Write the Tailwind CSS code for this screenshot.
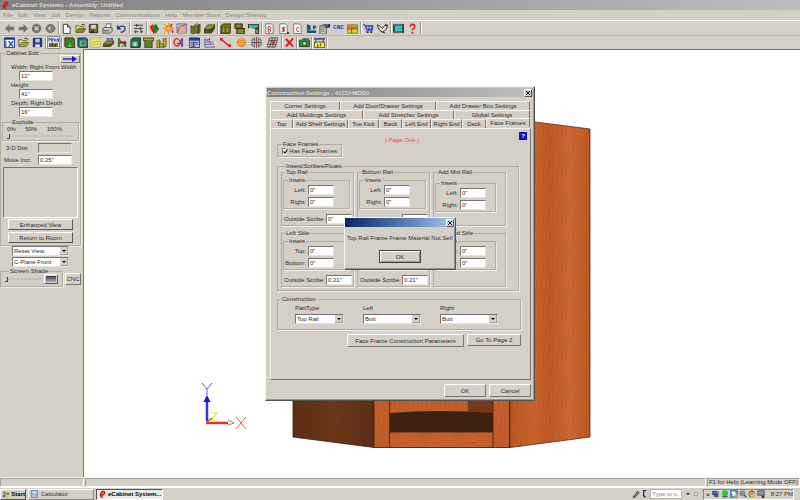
<!DOCTYPE html>
<html lang="en">

<head>
    <meta charset="UTF-8">
    <meta name="viewport" content="width=device-width, initial-scale=1.0">
    <title>eCabinet Systems - Assembly: Untitled</title>
    <script src="https://cdn.jsdelivr.net/npm/@tailwindcss/browser@4"></script>
</head>

<body class="relative flex h-screen flex-col overflow-hidden bg-[#d4d0c8] font-['Liberation_Sans',Arial,sans-serif] text-[6px] leading-[8px] text-[#2c2a28]
    [&_fieldset]:min-w-0 [&_fieldset]:border [&_fieldset]:border-[#b0aca4] [&_fieldset]:shadow-[1px_1px_0_#f0eee8]
    [&_legend]:ml-1 [&_legend]:px-px [&_legend]:leading-[6px] [&_legend]:whitespace-nowrap
    [&_input[type=text]]:h-[10px] [&_input[type=text]]:min-w-0 [&_input[type=text]]:border [&_input[type=text]]:border-t-[#77736c] [&_input[type=text]]:border-l-[#77736c] [&_input[type=text]]:border-r-[#e8e5de] [&_input[type=text]]:border-b-[#e8e5de] [&_input[type=text]]:bg-white [&_input[type=text]]:px-px
    [&_select]:h-[10px] [&_select]:w-full [&_select]:appearance-none [&_select]:border [&_select]:border-t-[#77736c] [&_select]:border-l-[#77736c] [&_select]:border-r-[#e8e5de] [&_select]:border-b-[#e8e5de] [&_select]:bg-white [&_select]:px-px [&_select]:leading-[8px]
    [&_label]:whitespace-nowrap [&_button]:whitespace-nowrap">

    <!-- title bar -->
    <header class="flex h-[10px] shrink-0 items-center gap-[3px] bg-linear-to-r from-[#808080] to-[#bcbcbc] pl-0.5">
        <svg class="h-2 w-[7px]" viewBox="0 0 14 16"><path d="M3 11c6-1 9-4 8-7-1-2-5-1-7 3-2 5 0 8 4 7" fill="none" stroke="#d81414" stroke-width="3.2"/></svg>
        <h1 class="font-bold text-[#dedbd5]">eCabinet Systems - Assembly: Untitled</h1>
    </header>

    <nav class="flex h-[10px] shrink-0 items-center gap-[5px] pl-[3px] text-[#8b8881]">
        <a href="#">File</a>
        <a href="#">Edit</a>
        <a href="#">View</a>
        <a href="#">Job</a>
        <a href="#">Design</a>
        <a href="#">Reports</a>
        <a href="#">Communications</a>
        <a href="#">Help</a>
        <a href="#">Member Store</a>
        <a href="#">Design Sharing</a>
    </nav>

    <!-- toolbars -->
    <div class="flex h-[15px] shrink-0 items-center border-t border-[#f4f2ee] pl-[3px] [&_button]:flex [&_button]:flex-1 [&_button]:justify-center [&_svg]:size-[11px] [&>i]:mx-px [&>i]:h-3 [&>i]:w-px [&>i]:bg-[#99958d] [&>i]:shadow-[1px_0_0_#fff]">
        <div class="flex w-[54px]">
            <button aria-label="Back"><svg viewBox="0 0 12 12"><path d="M1 6l5-5v3h5v4H6v3z" fill="#77746e"/></svg></button>
            <button aria-label="Forward"><svg viewBox="0 0 12 12"><path d="M11 6L6 1v3H1v4h5v3z" fill="#77746e"/></svg></button>
            <button aria-label="Stop"><svg viewBox="0 0 12 12"><circle cx="6" cy="6" r="5.2" fill="#77746e"/><path d="M4 4l4 4M8 4l-4 4" stroke="#d4d0c8" stroke-width="1.5"/></svg></button>
            <button aria-label="Refresh"><svg viewBox="0 0 12 12"><circle cx="6" cy="6" r="3.7" fill="none" stroke="#77746e" stroke-width="2.6"/><path d="M6 3v6l3-3z" fill="#77746e"/><path d="M0 6h3M9 6h3" stroke="#77746e"/></svg></button>
        </div>
        <i></i>
        <div class="flex w-[68px]">
            <button aria-label="New"><svg viewBox="0 0 12 12"><path d="M2.500 1.500h4.500l3 3v7h-7.500z" fill="#fff" stroke="#333"/><path d="M7 1.500v3h3" fill="none" stroke="#333"/></svg></button>
            <button aria-label="Open"><svg viewBox="0 0 12 12"><path d="M1 10V3h3l1 1h4v2" fill="#ece88c" stroke="#55531a"/><path d="M1 10.500l2.500-4.500H12l-3 4.500z" fill="#85822b" stroke="#55531a" stroke-width=".7"/><path d="M7 2q2-2 4 1" fill="none" stroke="#222"/></svg></button>
            <button aria-label="Save"><svg viewBox="0 0 12 12"><path d="M1.500 1.500h9v9h-9z" fill="#76742a" stroke="#222"/><path d="M3.500 2h5v4h-5z" fill="#d9d6ce"/><path d="M3.500 8h5v3h-5z" fill="#222"/><path d="M7 8.500h1V10H7z" fill="#fff"/></svg></button>
            <button aria-label="Print"><svg viewBox="0 0 12 12"><path d="M4 5l1-4h5L9 5" fill="#fff" stroke="#444" stroke-width=".8"/><path d="M1 6l2-1h8v4l-2 2H1z" fill="#d8d5cc" stroke="#444"/><path d="M2 8.500h6" stroke="#333"/><path d="M7 9.300h2" stroke="#c9bf33"/></svg></button>
            <button aria-label="Undo"><svg viewBox="0 0 12 12"><path d="M2 6c2-4 8-3 8 0 0 2-1 3-3 4H5" fill="none" stroke="#20307e" stroke-width="1.3"/><path d="M1 2v5h5z" fill="#20307e"/></svg></button>
        </div>
        <i></i>
        <div class="flex w-[14px]">
            <button aria-label="Settings"><svg viewBox="0 0 12 12"><path d="M1 2.500h10M1 6h10M1 9.500h5M8 9.500h3" stroke="#444"/><path d="M4 1v3M8 4.500v3M3 8v3M9 8v3" stroke="#444" stroke-width="1.400"/></svg></button>
        </div>
        <i></i>
        <div class="flex w-[68px]">
            <button aria-label="Materials"><svg viewBox="0 0 12 12"><path d="M1 4l3-3 3 9-2 2z" fill="#e22216"/><path d="M4 3l4-2 3 6-4 5z" fill="#16921c"/><path d="M1 4l2 5 4 2-3-7z" fill="#d2231a"/><path d="M7 2l3 5" stroke="#4a3814"/></svg></button>
            <button aria-label="Lighting"><svg viewBox="0 0 12 12"><circle cx="6" cy="6" r="3" fill="#f6c32a" stroke="#e45718"/><path d="M1 1l2 2M11 1L9 3M1 11l2-2M11 11L9 9M0 6h2M10 6h2M6 0v2M6 10v2" stroke="#cf8d1b"/><path d="M9 1v3M10.500 8v3" stroke="#b71616" stroke-width="1.400"/></svg></button>
            <button aria-label="Arc"><svg viewBox="0 0 12 12"><path d="M1 1h10.500v10H1z" fill="#b9b8db" stroke="#7474a9"/><path d="M2 10.500C2 5 6 2 11 2v8.500z" fill="#dda996"/><path d="M2 10.500C2 5 6 2 11 2" fill="none" stroke="#b93c2c"/></svg></button>
            <button aria-label="Cabinet doors"><svg viewBox="0 0 12 12"><path d="M1 3l3 1v8l-3-1zM5 3h4v8H5zM9 3l2-2v9l-2 2z" fill="#7c7a20" stroke="#302f0c" stroke-width=".7"/><path d="M4 3l3-2 4 1" fill="none" stroke="#5b5918"/></svg></button>
            <button aria-label="Board"><svg viewBox="0 0 12 12"><path d="M0 7l4-5h8L8 7z" fill="#96933b" stroke="#302f0c" stroke-width=".7"/><path d="M0 7h8v4H0zM8 7l4-5v4l-4 5z" fill="#56541a" stroke="#302f0c" stroke-width=".7"/></svg></button>
        </div>
        <i></i>
        <div class="flex w-[41px]">
            <button aria-label="Cabinet"><svg viewBox="0 0 12 12"><path d="M1 3l3-2h8v9l-2 2H1z" fill="#7c7a20" stroke="#302f0c"/><path d="M2.500 4.500h3v6h-3zM6.500 4.500h3v6h-3z" fill="#a29f47" stroke="#302f0c" stroke-width=".6"/></svg></button>
            <button aria-label="Cabinet group"><svg viewBox="0 0 12 12"><path d="M1 1h8v5H1zM3 6h9v6H3z" fill="#6f6d1d" stroke="#302f0c"/><path d="M3 3h4M5 8h5M5 10h5" stroke="#b4b04c"/></svg></button>
            <button aria-label="Counter top"><svg viewBox="0 0 12 12"><path d="M0 1h12v11H8V6H0z" fill="#2b2f24"/><path d="M1 2h10v3H9L7 7 5 5H1z" fill="#36b4b2"/><path d="M1 5h3l2 3v3H1z" fill="#dcdbc0"/><path d="M9 7h2v4H9z" fill="#a9a75a"/></svg></button>
        </div>
        <i></i>
        <div class="flex w-[96px]">
            <button aria-label="Bill report"><svg viewBox="0 0 12 12"><path d="M2 1h6l2 2v8.500H2z" fill="#fff" stroke="#555" stroke-width=".8"/><path d="M4.500 4v6h2q1.500-1.500 0-3 1.500-1.500 0-3zM4.500 7h2" fill="none" stroke="#c52424"/></svg></button>
            <button aria-label="Cost report"><svg viewBox="0 0 12 12"><path d="M2 1h6l2 2v8.500H2z" fill="#fff" stroke="#555" stroke-width=".8"/><path d="M8 5H5v2h2v2H4M6 4v6" fill="none" stroke="#c52424"/><path d="M10 10h2v2h-2z" fill="#222"/></svg></button>
            <button aria-label="Cut report"><svg viewBox="0 0 12 12"><path d="M2 1h6l2 2v8.500H2z" fill="#fff" stroke="#555" stroke-width=".8"/><path d="M8 5.500q-3-2-3 1.500t3 2" fill="none" stroke="#c52424"/></svg></button>
            <button aria-label="Machine"><svg viewBox="0 0 12 12"><path d="M1 1v10h10V8H5V3z" fill="#28507c"/><path d="M6 3h5v2L8 8V4z" fill="#37465a"/><path d="M2 8h9" stroke="#62a3b4"/></svg></button>
            <button aria-label="Properties"><svg viewBox="0 0 12 12"><path d="M1 3h7v9H1z" fill="#c9c6be" stroke="#555"/><path d="M2 5h5M2 7h4M2 9h4" stroke="#777"/><path d="M3 2l4-1 4 1v3L8 6 6 3z" fill="#4e5056"/><path d="M10 1h2v4h-2z" fill="#1c20b0"/></svg></button>
            <button class="items-center font-['Liberation_Mono',monospace] text-[6px] font-bold text-[#2d36c6]">CNC</button>
            <button aria-label="Nesting"><svg viewBox="0 0 12 12"><path d="M.5 2h11v9H.5z" fill="#ded22c" stroke="#8d7b19"/><path d="M1 2.500h6v4H1z" fill="#e97b23"/><path d="M7 3h4v3H7z" fill="#50b93a"/><path d="M1 6.500h10M5 6.500V11" stroke="#b32c16"/></svg></button>
        </div>
        <i></i>
        <div class="flex w-[27px]">
            <button aria-label="Cart"><svg viewBox="0 0 12 12"><path d="M0 2h2l2 6h6l1-5H3" fill="#4750d3" stroke="#2028a6"/><path d="M3 5h8M5 3v5M8 3v5" stroke="#c8cbef" stroke-width=".6"/><path d="M4 10h2M8 10h2" stroke="#222" stroke-width="2"/></svg></button>
            <button aria-label="Handshake"><svg viewBox="0 0 12 12"><path d="M0 2l3 1 3 3 2-3 4-1-2 5-4 3-4-3z" fill="#d5e3d2" stroke="#333"/><path d="M4 9l5 2M9 1l2 3" stroke="#222"/><path d="M1 4l2 2" stroke="#32843a"/></svg></button>
        </div>
        <i></i>
        <div class="flex w-[27px]">
            <button aria-label="Video"><svg viewBox="0 0 12 12"><path d="M0 1h12v10H0z" fill="#2b4545"/><path d="M2 3h8v6H2z" fill="#39c3c0"/><path d="M1 2h10M1 10h10" stroke="#b9cfcd" stroke-dasharray="1 1"/></svg></button>
            <button aria-label="Help"><svg viewBox="0 0 12 12"><path d="M3.500 4q0-2.500 2.500-2.500T8.500 4q0 1.500-2.500 3v1" fill="none" stroke="#dc1f1f" stroke-width="1.700"/><path d="M5 9.500h2v2H5z" fill="#dc1f1f"/></svg></button>
        </div>
        <i></i>
    </div>

    <div class="flex h-[14px] shrink-0 items-center border-t border-[#b7b3ab] pl-[3px] [&_button]:flex [&_button]:flex-1 [&_button]:justify-center [&_svg]:size-[11px] [&>i]:mx-px [&>i]:h-3 [&>i]:w-px [&>i]:bg-[#99958d] [&>i]:shadow-[1px_0_0_#fff]">
        <div class="flex w-[41px]">
            <button aria-label="Exit view"><svg viewBox="0 0 12 12"><path d="M.5 1h11v10.500H.5z" fill="#fff" stroke="#1c2fa6"/><path d="M0 1h12v2H0z" fill="#1c2fa6"/><path d="M5 4.500l5 6M10 4.500l-5 6" stroke="#2238d0" stroke-width="1.500"/><path d="M2 4v7" stroke="#222"/></svg></button>
            <button aria-label="Open assembly"><svg viewBox="0 0 12 12"><path d="M1 10V3h3l1 1h4v2" fill="#ece88c" stroke="#55531a"/><path d="M1 10.500l2.500-4.500H12l-3 4.500z" fill="#aaa63f" stroke="#55531a" stroke-width=".7"/><path d="M7 2q2-2 4 1" fill="none" stroke="#222"/></svg></button>
            <button aria-label="Save assembly"><svg viewBox="0 0 12 12"><path d="M1.500 1.500h9v9h-9z" fill="#2632a6" stroke="#141c5c"/><path d="M3.500 2h5v4h-5z" fill="#a3d8a6"/><path d="M3.500 8h5v3h-5z" fill="#dbe7ff"/></svg></button>
        </div>
        <i></i>
        <div class="flex w-[13px] border border-[#8b8780] bg-[#efede8]">
            <button aria-label="Main"><svg viewBox="0 0 12 12"><path d="M1 5V1l1.500 2L4 1v4M5 5V2h2v3M8.500 2v3M10 5V2h1.500v3" fill="none" stroke="#2632b6" stroke-width=".9"/><path d="M1 7l3-1 3 1 4-1v5H1z" fill="#7c7a30"/><path d="M2 7v4M5 7v4M8 7v4" stroke="#333217"/></svg></button>
        </div>
        <i></i>
        <div class="flex w-[105px]">
            <button aria-label="Base cabinet"><svg viewBox="0 0 12 12"><path d="M1 1h9l2 2v9H3l-2-2z" fill="#6c6a20" stroke="#2c2b0c"/><path d="M3 4h7v5H3z" fill="#1f8d2e"/><path d="M5 9l1.500-3L8 9v2H5z" fill="#3dd052"/></svg></button>
            <button aria-label="Wall cabinet"><svg viewBox="0 0 12 12"><path d="M1 1h9l2 2v9H3l-2-2z" fill="#25706d" stroke="#143634"/><path d="M3 4h7v6H3z" fill="#48c1bc"/><path d="M5 5h4v4H5z" fill="#7a7428"/></svg></button>
            <button aria-label="Panel"><svg viewBox="0 0 12 12"><path d="M.5 2l1.500-1h9.500v10H.5z" fill="#e5df7c" stroke="#b0a846" stroke-dasharray="2 1"/><path d="M2 5h8M2 8h8" stroke="#c6be58"/></svg></button>
            <button aria-label="Shelf"><svg viewBox="0 0 12 12"><path d="M0 8l4-4h8l-4 4z" fill="#8b8834" stroke="#302f0c" stroke-width=".7"/><path d="M0 8h8v3H0zM8 8l4-4v3l-4 4z" fill="#4d4b18"/><path d="M4 1h3v2H4zM8 1h3v2H8z" fill="#4148ab"/></svg></button>
            <button aria-label="Chair"><svg viewBox="0 0 12 12"><path d="M2 1v10M2 6h7v5" fill="none" stroke="#167c2b" stroke-width="2"/><path d="M3 2l2 3h5v2H4z" fill="#b31f1f"/><path d="M5 11l4-4" stroke="#431"/></svg></button>
            <button aria-label="Appliance"><svg viewBox="0 0 12 12"><path d="M1 3l2-2h9v9l-2 2H1z" fill="#246a32" stroke="#14381a"/><path d="M2 5h7v5H2z" fill="#39a8cf"/><path d="M4 6h3v4H4z" fill="#e7e94f"/><path d="M9 5h2v5H9z" fill="#2538ad"/></svg></button>
            <button aria-label="Hood"><svg viewBox="0 0 12 12"><path d="M0 1h12v3h-2v8H2V4H0z" fill="#77751f" stroke="#34330e" stroke-width=".8"/><path d="M4 6h4v5H4z" fill="#2d8f39"/><path d="M1 2.500h10" stroke="#bcb94e"/></svg></button>
            <button aria-label="Trim"><svg viewBox="0 0 12 12"><path d="M1 4h3v8H1zM8 3l3-2v9l-3 2zM4 6l4 2v3H4z" fill="#bcb738" stroke="#4a4814" stroke-width=".8"/><path d="M3 2l2 3M8 1v3" stroke="#77751f"/></svg></button>
        </div>
        <i></i>
        <div class="flex w-[109px]">
            <button aria-label="Origin"><svg viewBox="0 0 12 12"><path d="M6 3Q3 0 1.500 4T4 10q3 0 3-3H4M7 3l3 7M10 2L7 8" fill="none" stroke="#cf2525" stroke-width="1.400"/><path d="M9 1h2v10H9z" fill="#3039b0" fill-opacity=".7"/></svg></button>
            <button aria-label="Sheet"><svg viewBox="0 0 12 12"><path d="M.5 1h11v10.500H.5z" fill="#bcc3d9" stroke="#323c6d"/><path d="M0 1h12v3H0z" fill="#2838a2"/><path d="M2 6h8M2 8h8M2 10h5M5 5v6" stroke="#434e7b"/></svg></button>
            <button aria-label="Dimensions"><svg viewBox="0 0 12 12"><path d="M1 1v10h11M1 3h5M2 5.500h8M1 8h10" fill="none" stroke="#5656a9"/><path d="M3 3l5 5" stroke="#b25a79"/><path d="M6 1v3" stroke="#333"/></svg></button>
            <button aria-label="Line"><svg viewBox="0 0 12 12"><path d="M2 3l8 7" stroke="#d22626" stroke-width="1.600"/><path d="M0 1h3v3H0zM9 8h3v3H9z" fill="#d22626"/><path d="M1 1h1v1H1z" fill="#2733b5"/></svg></button>
            <button aria-label="Ball"><svg viewBox="0 0 12 12"><circle cx="6" cy="6" r="4.300" fill="#f5cb3a" stroke="#e0831f" stroke-width="1.200"/><path d="M1 6h10M3 8.500h7M3 4h6" stroke="#e0651f" stroke-width=".8"/></svg></button>
            <button aria-label="Mirror"><svg viewBox="0 0 12 12"><path d="M4 1L1 3v6l3 2zM8 1l3 2v6l-3 2z" fill="#c7bdc0" stroke="#555"/><path d="M6 0v12" stroke="#a32c41"/><path d="M1 6h10" stroke="#555"/></svg></button>
            <button aria-label="Grid"><svg viewBox="0 0 12 12"><path d="M3 1h9l-3 10H0zM2 4h9M1 8h9M6 1L3 11M9 1L6 11" fill="none" stroke="#4a4545"/><path d="M6 4h3L8 8H5z" fill="#c03b4a"/></svg></button>
        </div>
        <i></i>
        <div class="flex w-[12px]">
            <button aria-label="Delete"><svg viewBox="0 0 12 12"><path d="M2 2l8 8.500M10 1.500L2 10.500" stroke="#d91f1f" stroke-width="2.200"/></svg></button>
        </div>
        <i></i>
        <div class="flex w-[12px]">
            <button aria-label="Camera"><svg viewBox="0 0 12 12"><path d="M.5 3.500H3L4.500 2h4L10 3.500h1.500v7H.5z" fill="#37873a" stroke="#1d4d20"/><circle cx="6" cy="7" r="2.300" fill="#b8dcb6" stroke="#173d1a"/><path d="M9 1h2v2H9z" fill="#c4433b"/></svg></button>
        </div>
        <i></i>
        <div class="flex w-[12px]">
            <button aria-label="Ruler"><svg viewBox="0 0 12 12"><path d="M.5 5.500h11v6H.5z" fill="#efe545" stroke="#68631b"/><path d="M0 1h12v2H0z" fill="#4650a0"/><path d="M2 3v3M10 3v3M4 8v3M7 7v3" stroke="#333"/></svg></button>
        </div>
        <i></i>
    </div>

    <main class="flex min-h-0 flex-1">
        <!-- left panel -->
        <aside class="w-[84px] shrink-0 border-r border-[#77736c] pt-px pr-0.5">
            <fieldset class="pb-0.5">
                <legend>Cabinet Edit</legend>
                <div class="flex h-[7px] justify-end">
                    <button aria-label="Next" class="-mt-px flex h-2 w-5 items-center justify-center border border-t-white border-l-white border-r-[#77736c] border-b-[#77736c]"><svg class="h-1.5 w-4" viewBox="0 0 16 6"><path d="M1 3h10" stroke="#1414d8" stroke-width="1.300"/><path d="M10 0l5 3-5 3z" fill="#1414d8"/></svg></button>
                </div>
                <div class="flex flex-col items-start pl-[10px] [&_input]:ml-2 [&_input]:w-[34px]">
                    <label for="width">Width: Right Front Width</label>
                    <input type="text" id="width" value='12"'>
                    <label for="height">Height</label>
                    <input type="text" id="height" value='41"'>
                    <label for="depth">Depth: Right Depth</label>
                    <input type="text" id="depth" value='16"'>
                </div>
                <fieldset class="mx-px mt-0.5 px-1 pb-px">
                    <legend>Explode</legend>
                    <div class="flex justify-between pr-3"><span>0%</span><span>50%</span><span>100%</span></div>
                    <input type="range" aria-label="Explode" value="0" class="block h-1.5 w-[66px] appearance-none bg-linear-to-b from-transparent from-40% via-[#8b8780] via-50% to-transparent to-60% [&::-webkit-slider-thumb]:h-[5px] [&::-webkit-slider-thumb]:w-[3px] [&::-webkit-slider-thumb]:appearance-none [&::-webkit-slider-thumb]:border-r [&::-webkit-slider-thumb]:border-b [&::-webkit-slider-thumb]:border-[#444] [&::-webkit-slider-thumb]:bg-[#d4d0c8]">
                </fieldset>
                <div class="mt-0.5 grid grid-cols-[34px_34px] items-center gap-y-0.5 pl-[3px] [&_input]:w-full">
                    <label for="dist" class="pl-0.5">3-D Dist</label>
                    <input type="text" id="dist" disabled class="bg-[#d4d0c8]!">
                    <label for="move">Move Incr.</label>
                    <input type="text" id="move" value='0.25"'>
                </div>
                <div class="mx-0.5 mt-0.5 h-[51px] border border-t-[#77736c] border-l-[#77736c] border-r-white border-b-white"></div>
                <div class="mt-px flex flex-col gap-0.5 px-[7px]">
                    <button class="h-[11px] border border-t-white border-l-white border-r-[#5c5953] border-b-[#5c5953]">Enhanced View</button>
                    <button class="h-[11px] border border-t-white border-l-white border-r-[#5c5953] border-b-[#5c5953]">Return to Room</button>
                </div>
            </fieldset>
            <div class="flex flex-col gap-px px-3">
                <div class="relative flex">
                    <select aria-label="View"><option>Reset View</option></select>
                    <svg class="pointer-events-none absolute top-px right-px size-2" viewBox="0 0 8 8"><path d="M0 0h8v8H0z" fill="#d4d0c8"/><path d="M0 8h8V0" fill="none" stroke="#77736c"/><path d="M2 3h4L4 5z" fill="#000"/></svg>
                </div>
                <div class="relative flex">
                    <select aria-label="Plane"><option>C-Plane Front</option></select>
                    <svg class="pointer-events-none absolute top-px right-px size-2" viewBox="0 0 8 8"><path d="M0 0h8v8H0z" fill="#d4d0c8"/><path d="M0 8h8V0" fill="none" stroke="#77736c"/><path d="M2 3h4L4 5z" fill="#000"/></svg>
                </div>
            </div>
            <div class="mt-px flex items-end gap-0.5">
                <fieldset class="w-[63px] px-1 pb-0.5">
                    <legend>Screen Shade</legend>
                    <div class="flex items-center justify-between">
                        <input type="range" aria-label="Screen Shade" value="0" class="block h-1.5 w-9 appearance-none bg-linear-to-b from-transparent from-40% via-[#77736c] via-50% to-transparent to-60% [&::-webkit-slider-thumb]:h-[5px] [&::-webkit-slider-thumb]:w-[3px] [&::-webkit-slider-thumb]:appearance-none [&::-webkit-slider-thumb]:border-r [&::-webkit-slider-thumb]:border-b [&::-webkit-slider-thumb]:border-[#444] [&::-webkit-slider-thumb]:bg-[#d4d0c8]">
                        <button aria-label="Shade" class="h-[10px] w-[14px] border border-t-white border-l-white border-r-[#5c5953] border-b-[#5c5953] p-px"><span class="block h-full bg-linear-to-b from-[#3c3b50] to-[#b5b3b4]"></span></button>
                    </div>
                </fieldset>
                <button class="mb-0.5 h-3 w-4 border border-t-white border-l-white border-r-[#77736c] border-b-[#77736c]">CNC</button>
            </div>
        </aside>

        <!-- 3D view -->
        <section class="min-w-0 flex-1 border-t border-[#77736c] bg-white">
            <svg class="block size-full" viewBox="84 50 716 427" preserveAspectRatio="xMinYMin meet">
                <defs>
                    <linearGradient id="side" x1="0" x2="1"><stop offset="0" stop-color="#bd5823"/><stop offset=".3" stop-color="#c9632d"/><stop offset=".5" stop-color="#bf5825"/><stop offset=".75" stop-color="#cc6933"/><stop offset="1" stop-color="#bc5923"/></linearGradient>
                    <linearGradient id="dark" x1="0" x2="1"><stop offset="0" stop-color="#5a2e15"/><stop offset=".5" stop-color="#6c371a"/><stop offset="1" stop-color="#5a2d15"/></linearGradient>
                    <pattern id="grain" width="9" height="46" patternUnits="userSpaceOnUse"><path d="M1 0v29M4 12v34M6 3v18M8 24v20" stroke="#5c1f06" stroke-opacity=".1"/></pattern>
                    <pattern id="hgrain" width="34" height="5" patternUnits="userSpaceOnUse"><path d="M0 1h20M11 3h23" stroke="#5c1f06" stroke-opacity=".15"/></pattern>
                </defs>
                <path d="M510 122h25l55 7v308l-80 10.500z" fill="url(#side)"/>
                <path d="M510 122h25l55 7v308l-80 10.500z" fill="url(#grain)" stroke="#572810" stroke-width=".8"/>
                <path d="M293 380h81v67.500L293 437z" fill="url(#dark)"/>
                <path d="M293 380h81v67.500L293 437z" fill="url(#grain)" stroke="#3c1b0a" stroke-width=".8"/>
                <path d="M374 380h136v67.500H374z" fill="#c25f2b"/>
                <path d="M374 380h136v67.500H374z" fill="url(#grain)"/>
                <path d="M468 380h25v40h-25z" fill="#78391a"/>
                <path d="M390 413q50-4 103 0v19H390z" fill="#3c2010"/>
                <path d="M390 432h103v15.500H390z" fill="#c5622e"/>
                <path d="M390 413h103v34H390z" fill="url(#hgrain)"/>
                <path d="M389.500 380v67.500M493 380v67.500M509.500 380v67.500M390 432h103M374 447.500h136M374 380v67" fill="none" stroke="#4a2210" stroke-width=".9"/>
                <!-- axes -->
                <path d="M207 421v-23" stroke="#3333d6" stroke-width="2.500"/>
                <path d="M207 395l3.500 7h-7z" fill="#1616d2"/>
                <path d="M202 383l5 6 5-6M207 389v6" fill="none" stroke="#5b5be4"/>
                <path d="M206 423h22" stroke="#da3333" stroke-width="2.500"/>
                <path d="M228 420l6 3-6 2" fill="none" stroke="#c24b4b" stroke-width=".8"/>
                <path d="M236 417l10 12M246 417l-10 12" stroke="#e25858"/>
                <path d="M211 413h6l-6 7h6" fill="none" stroke="#eeee20" stroke-width="1.200"/>
                <path d="M207 422l5-4" stroke="#7c7a10" stroke-width="1.500"/>
            </svg>
        </section>
    </main>

    <!-- status bar -->
    <footer class="flex h-[10px] shrink-0 gap-px border-t border-[#f4f2ee]">
        <div class="w-[84px] border border-t-[#a5a199] border-l-[#a5a199] border-r-white border-b-white"></div>
        <div class="flex-1 border border-t-[#a5a199] border-l-[#a5a199] border-r-white border-b-white"></div>
        <div class="border border-t-[#a5a199] border-l-[#a5a199] border-r-white border-b-white px-px leading-[7px] whitespace-nowrap">F1 for Help (Learning Mode OFF)</div>
    </footer>

    <!-- taskbar -->
    <div class="flex h-[13px] shrink-0 items-center border-t border-white">
        <button class="flex h-[11px] w-[26px] items-center gap-px border border-t-white border-l-white border-r-[#55524c] border-b-[#55524c] pl-px font-bold text-black">
            <svg class="size-[9px]" viewBox="0 0 16 16"><path d="M3 3q2-2 5 0L7 8Q4 6 2 8z" fill="#e0522a"/><path d="M9 3q3 2 6 0l-1 5q-3 2-6 0z" fill="#5fae2f"/><path d="M2 9q2-2 5 0l-1 5Q3 12 1 14z" fill="#3c74d2"/><path d="M8 9q3 2 6 0l-1 5q-3 2-6 0z" fill="#f0bf2a"/></svg>Start
        </button>
        <button class="ml-0.5 flex h-[11px] w-[66px] items-center gap-[3px] border border-t-white border-l-white border-r-[#8b8780] border-b-[#8b8780] pl-0.5">
            <svg class="h-2 w-[7px]" viewBox="0 0 14 16"><path d="M1 1h12v14H1z" fill="#7fa5d8" stroke="#44679d"/><path d="M3 3h8v3H3z" fill="#eef5ff"/><path d="M3 8h8M3 10.500h8M3 13h8" stroke="#eef5ff" stroke-width="1.300" stroke-dasharray="2 1"/></svg>Calculator
        </button>
        <button class="ml-0.5 flex h-[11px] w-[67px] items-center gap-0.5 border border-t-[#55524c] border-l-[#55524c] border-r-white border-b-white bg-[#ebe9e5] pl-0.5 font-bold text-black">
            <svg class="h-2 w-[7px] shrink-0" viewBox="0 0 14 16"><path d="M3 11c6-1 9-4 8-7-1-2-5-1-7 3-2 5 0 8 4 7" fill="none" stroke="#d81414" stroke-width="3.200"/></svg>eCabinet System...
        </button>
        <div class="ml-auto flex items-center gap-[3px] pr-1.5">
            <svg class="size-2" viewBox="0 0 12 12"><path d="M2 10l6-8 3 2-6 6z" fill="#8b8880" stroke="#333"/><path d="M1 11h5" stroke="#333"/></svg>
            <svg class="h-2 w-1" viewBox="0 0 6 12"><path d="M5 1H1v8l3 2" fill="none" stroke="#1c2c78" stroke-width="2"/></svg>
            <input type="text" aria-label="Search" placeholder="Type to s..." class="w-[32px] border-[#b7b3ab]! placeholder:text-[#8b8881]">
            <svg class="h-1 w-1.5" viewBox="0 0 6 4"><path d="M1 1h4L3 3z" fill="#222"/></svg>
            <svg class="size-1" viewBox="0 0 4 4"><path d="M.5.5h3v3h-3z" fill="#eee" stroke="#a5a199"/></svg>
            <div class="ml-0.5 flex h-[11px] items-center gap-px border border-t-[#8b8780] border-l-[#8b8780] border-r-white border-b-white pl-0.5 [&_svg]:size-2">
                <span class="mr-px font-bold">«</span>
                <svg viewBox="0 0 12 12"><path d="M1 2h6v5H1zM4 6h5v4H4z" fill="#4d67c2" stroke="#27346a"/><path d="M9 2q2 2 0 4" fill="none" stroke="#333"/></svg>
                <svg viewBox="0 0 12 12"><circle cx="6" cy="5" r="4.500" fill="#28c63c"/><path d="M2 9h8v2H2z" fill="#227a2c"/></svg>
                <svg viewBox="0 0 12 12"><path d="M0 0h12v12H0z" fill="#4c88b5"/><path d="M2 3l5-1 3 5-5 3z" fill="#fff"/><path d="M7 7h5v5H7z" fill="#e09838"/></svg>
                <svg viewBox="0 0 12 12"><circle cx="5" cy="5" r="4" fill="#a3a6af" stroke="#565a66"/><path d="M8 8l3 3" stroke="#444" stroke-width="2"/><path d="M3 5h4" stroke="#333"/></svg>
                <svg viewBox="0 0 12 12"><circle cx="6" cy="6" r="5.500" fill="#e0b326"/><path d="M1 4q4-6 9-1L6 6z" fill="#d83328"/><path d="M1 4l4 7q-5-1-4-7" fill="#2d9b42"/><circle cx="6" cy="6" r="2.300" fill="#3f74d0" stroke="#fff"/></svg>
                <svg viewBox="0 0 12 12"><path d="M1 1h10v7H1z" fill="#8d9098" stroke="#44464d"/><path d="M7 8h4v4H7z" fill="#333"/></svg>
                <time class="ml-[5px] whitespace-nowrap">8:27 PM</time>
            </div>
        </div>
    </div>

    <!-- construction settings window -->
    <section class="absolute top-[86px] left-[265px] flex h-[315px] w-[270px] flex-col border border-t-[#f4f2ee] border-l-[#f4f2ee] border-r-[#55524c] border-b-[#55524c] bg-[#d4d0c8] shadow-[inset_-1px_-1px_0_#99958d]">
        <div class="mx-px mt-px flex h-[9px] items-center justify-between bg-linear-to-r from-[#808080] to-[#bebebe] pr-px">
            <h2 class="font-bold text-[#dedbd5]">Construction Settings - 41CU-MOD1</h2>
            <button aria-label="Close" class="size-2 border border-t-white border-l-white border-r-[#55524c] border-b-[#55524c] bg-[#d4d0c8]"><svg viewBox="0 0 6 6"><path d="M1 1l4 4M5 1L1 5" stroke="#000"/></svg></button>
        </div>
        <div class="mx-1 mt-1 flex flex-col [&_button]:h-[9px] [&_button]:border-t [&_button]:border-l [&_button]:border-r [&_button]:border-t-[#f4f2ee] [&_button]:border-l-[#f4f2ee] [&_button]:border-r-[#77736c] [&_button]:leading-[8px]">
            <div class="grid grid-cols-[70px_96px_1fr]">
                <button>Corner Settings</button>
                <button>Add Door/Drawer Settings</button>
                <button>Add Drawer Box Settings</button>
            </div>
            <div class="grid grid-cols-[93px_91px_1fr]">
                <button>Add Moldings Settings</button>
                <button>Add Stretcher Settings</button>
                <button>Global Settings</button>
            </div>
            <div class="grid grid-cols-[23px_55px_31px_23px_29px_31px_24px_1fr]">
                <button>Top</button>
                <button>Add Shelf Settings</button>
                <button>Toe Kick</button>
                <button>Back</button>
                <button>Left End</button>
                <button>Right End</button>
                <button>Deck</button>
                <button class="-mt-px bg-[#d4d0c8]">Face Frames</button>
            </div>
        </div>
        <div class="mr-[3px] ml-1 flex flex-1 flex-col border border-t-[#f4f2ee] border-l-[#f4f2ee] border-r-[#77736c] border-b-[#77736c] pt-[3px] pr-[9px] pl-1.5">
            <div class="-mr-1.5 grid grid-cols-[65px_1fr_65px]">
                <fieldset class="mt-[9px] px-1 pt-px pb-0.5">
                    <legend class="ml-0!">Face Frames</legend>
                    <label class="relative flex h-1.5 items-center gap-[3px]">
                        <input type="checkbox" checked class="size-[7px] appearance-none border border-t-[#77736c] border-l-[#77736c] border-r-[#e8e5de] border-b-[#e8e5de] bg-white">
                        <svg class="pointer-events-none absolute left-0 size-[7px]" viewBox="0 0 7 7"><path d="M1.500 3.500L3 5l2.500-3.500" fill="none" stroke="#000" stroke-width="1.100"/></svg>
                        Has Face Frames
                    </label>
                </fieldset>
                <p class="mt-1 text-center text-[#e24848]">[ Page One ]</p>
                <button aria-label="Help" class="flex size-2 items-center justify-center justify-self-end bg-[#1212bd] font-bold text-white">?</button>
            </div>
            <fieldset class="mt-1.5 mr-0.5 pr-3 pb-[3px] pl-[3px]">
                <legend>Insets/Scribes/Floats</legend>
                <div id="groups" class="grid grid-cols-3 gap-x-[3px] gap-y-1 [&_input]:w-[26px]"></div>
            </fieldset>
            <fieldset class="mt-[5px] px-[17px] pt-0.5 pb-[5px]">
                <legend class="-ml-[14px]!">Construction</legend>
                <div class="grid grid-cols-[49px_58px_58px] justify-start gap-x-[19px] gap-y-0.5">
                    <label for="part">PartType</label>
                    <label for="left">Left</label>
                    <label for="right">Right</label>
                    <div class="relative flex">
                        <select id="part"><option>Top Rail</option></select>
                        <svg class="pointer-events-none absolute top-px right-px size-2" viewBox="0 0 8 8"><path d="M0 0h8v8H0z" fill="#d4d0c8"/><path d="M0 8h8V0" fill="none" stroke="#77736c"/><path d="M2 3h4L4 5z" fill="#000"/></svg>
                    </div>
                    <div class="relative flex">
                        <select id="left"><option>Butt</option></select>
                        <svg class="pointer-events-none absolute top-px right-px size-2" viewBox="0 0 8 8"><path d="M0 0h8v8H0z" fill="#d4d0c8"/><path d="M0 8h8V0" fill="none" stroke="#77736c"/><path d="M2 3h4L4 5z" fill="#000"/></svg>
                    </div>
                    <div class="relative flex">
                        <select id="right"><option>Butt</option></select>
                        <svg class="pointer-events-none absolute top-px right-px size-2" viewBox="0 0 8 8"><path d="M0 0h8v8H0z" fill="#d4d0c8"/><path d="M0 8h8V0" fill="none" stroke="#77736c"/><path d="M2 3h4L4 5z" fill="#000"/></svg>
                    </div>
                </div>
            </fieldset>
            <div class="mt-1 flex justify-end gap-[3px] [&_button]:border [&_button]:border-t-white [&_button]:border-l-white [&_button]:border-r-[#77736c] [&_button]:border-b-[#77736c]">
                <button class="h-[13px] w-[117px]">Face Frame Construction Parameters</button>
                <button class="h-3 w-[54px]">Go To Page 2</button>
            </div>
        </div>
        <div class="mt-1 mr-[3px] mb-[3px] flex justify-end gap-[3px] [&_button]:h-[13px] [&_button]:w-[42px] [&_button]:border [&_button]:border-t-white [&_button]:border-l-white [&_button]:border-r-[#77736c] [&_button]:border-b-[#77736c]">
            <button>OK</button>
            <button>Cancel</button>
        </div>
    </section>

    <!-- message box -->
    <section role="alertdialog" class="absolute top-[217px] left-[344px] flex h-[53px] w-[112px] flex-col items-center border border-t-[#f4f2ee] border-l-[#f4f2ee] border-r-[#55524c] border-b-[#55524c] bg-[#d4d0c8] shadow-[inset_-1px_-1px_0_#99958d]">
        <div class="flex h-[9px] w-full items-center justify-end bg-linear-to-r from-[#0a246a] to-[#a6caf0] pr-px">
            <button aria-label="Close" class="size-2 border border-t-white border-l-white border-r-[#55524c] border-b-[#55524c] bg-[#d4d0c8]"><svg viewBox="0 0 6 6"><path d="M1 1l4 4M5 1L1 5" stroke="#000"/></svg></button>
        </div>
        <p class="mt-[7px] whitespace-nowrap">Top Rail Frame Frame Material Not Set!</p>
        <button class="mt-2 h-[13px] w-[42px] border border-[#44423d] shadow-[inset_1px_1px_0_#fff,inset_-1px_-1px_0_#99958d]">OK</button>
    </section>
</body>

</html>
<script>
    let groups = [
        { name: "Top Rail", rows: ["Left:", "Right:"], scribe: '0"' },
        { name: "Bottom Rail", rows: ["Left:", "Right:"], scribe: '0"' },
        { name: "Add Mid Rail", rows: ["Left:", "Right:"], pad: "px-px pt-[5px] pb-px" },
        { name: "Left Stile", rows: ["Top:", "Bottom:"], scribe: '0.21"' },
        { name: "Right Stile", rows: ["Top:", "Bottom:"], scribe: '0.21"' },
        { name: "Add Mid Stile", rows: ["Top:", "Bottom:"] },
    ];

    let container = document.getElementById("groups");

    groups.forEach((g, i) => {
        let box = document.createElement("fieldset");
        box.className = g.pad || "px-px pt-0.5 pb-px";
        let inner = g.scribe ? "mr-0.5 pt-0.5 pb-px" : "mr-2 pt-0.5 pb-px";
        let rows = g.rows.map((r, j) => `
            <label for="g${i}r${j}" class="text-right">${r}</label>
            <input type="text" id="g${i}r${j}" value='0"'>`).join("");
        box.innerHTML = `
            <legend class="ml-0.5!">${g.name}</legend>
            <fieldset class="${inner}">
                <legend>Insets</legend>
                <div class="grid grid-cols-[22px_26px] items-center gap-x-0.5 gap-y-0.5">${rows}</div>
            </fieldset>`;
        if (g.scribe) {
            box.innerHTML += `
            <div class="mt-[5px] flex items-center justify-end gap-px">
                <label for="g${i}s">Outside Scribe:</label>
                <input type="text" id="g${i}s" value='${g.scribe}'>
            </div>`;
        }
        container.append(box);
    });
</script>
